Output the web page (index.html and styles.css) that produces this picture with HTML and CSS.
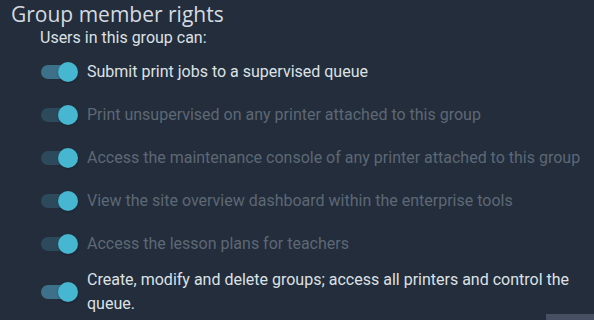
FILE: index.html
```html
<!DOCTYPE html>
<html>
<head>
<meta charset="utf-8">
<link rel="stylesheet" href="styles.css">
</head>
<body>
<div class="panel">
  <h2 class="title">Group member rights</h2>
  <div class="section">
    <div class="subtitle">Users in this group can:</div>
    <div class="rights">
      <label class="right">
        <span class="switch"><span class="track"></span><span class="thumb"></span></span>
        <span class="label">Submit print jobs to a supervised queue</span>
      </label>
      <label class="right disabled">
        <span class="switch"><span class="track"></span><span class="thumb"></span></span>
        <span class="label">Print unsupervised on any printer attached to this group</span>
      </label>
      <label class="right disabled">
        <span class="switch"><span class="track"></span><span class="thumb"></span></span>
        <span class="label">Access the maintenance console of any printer attached to this group</span>
      </label>
      <label class="right disabled">
        <span class="switch"><span class="track"></span><span class="thumb"></span></span>
        <span class="label">View the site overview dashboard within the enterprise tools</span>
      </label>
      <label class="right disabled">
        <span class="switch"><span class="track"></span><span class="thumb"></span></span>
        <span class="label">Access the lesson plans for teachers</span>
      </label>
      <label class="right">
        <span class="switch"><span class="track"></span><span class="thumb"></span></span>
        <span class="label">Create, modify and delete groups; access all printers and control the queue.</span>
      </label>
    </div>
  </div>
</div>
<div class="corner"></div>
</body>
</html>
```

FILE: styles.css
```css
html, body {
  margin: 0;
  padding: 0;
  background: #232d3b;
  height: 100%;
  overflow: hidden;
}
body {
  font-family: Roboto, "Liberation Sans", sans-serif;
  color: #dde1e6;
  position: relative;
}
.panel {
  padding: 3px 0 0 0;
}
.title {
  margin: 0 0 0 11px;
  font-family: "Open Sans", "Noto Sans", sans-serif;
  font-weight: 400;
  font-size: 21px;
  line-height: 23px;
  color: #d5dae0;
}
.section {
  margin-left: 40px;
}
.subtitle {
  font-size: 16px;
  line-height: 24px;
  color: #dce0e5;
}
.rights {
  display: flex;
  flex-direction: column;
  gap: 5px;
  margin-top: 3px;
}
.right {
  display: flex;
  align-items: center;
  margin-left: -11px;
  min-height: 38px;
}
.switch {
  position: relative;
  flex: none;
  width: 58px;
  height: 38px;
}
.track {
  position: absolute;
  left: 12px;
  top: 12px;
  width: 34px;
  height: 14px;
  border-radius: 7px;
  background: #3d7089;
}
.thumb {
  position: absolute;
  left: 29px;
  top: 9px;
  width: 20px;
  height: 20px;
  border-radius: 50%;
  background: #46b6d1;
  box-shadow: 0 1px 2px rgba(0,0,0,0.25);
}
.label {
  font-size: 16px;
  line-height: 24px;
  color: #dde1e6;
}
.disabled .track {
  background: #2d4a5c;
}
.disabled .label {
  color: #5d6875;
}
.corner {
  position: absolute;
  right: 0;
  bottom: 0;
  width: 48px;
  height: 6px;
  background: #465062;
}
```
